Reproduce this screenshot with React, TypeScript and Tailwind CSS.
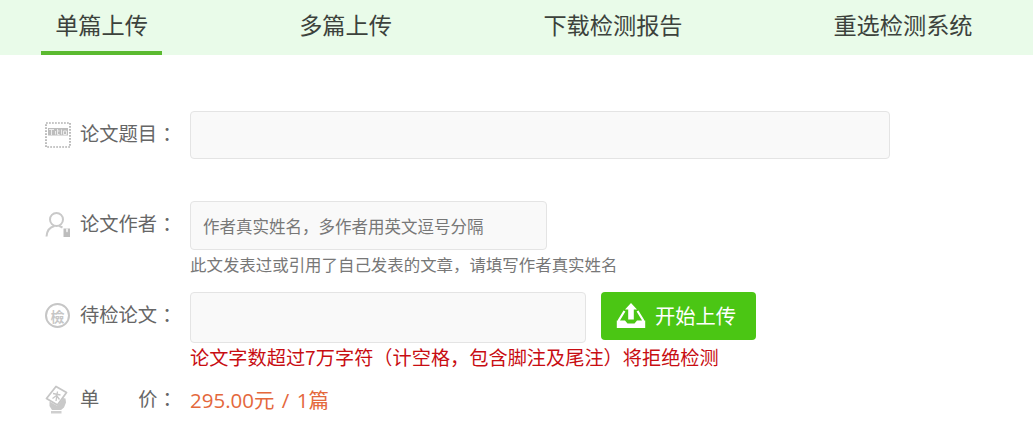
import type { ReactNode } from 'react';

const tabs = [
  { label: '单篇上传', className: 'ml-[41px] w-[121px]', active: true },
  { label: '多篇上传', className: 'ml-[123px] w-[121px]' },
  { label: '下载检测报告', className: 'ml-[122px] w-[170px]' },
  { label: '重选检测系统', className: 'ml-[120px] w-[170px]' },
];

function TitleIcon() {
  return (
    <svg width="26" height="26" viewBox="0 0 26 26" fill="none">
      <rect x="1" y="1" width="24" height="24" stroke="#8f8f8f" strokeWidth="1.2" strokeDasharray="1.8 1.2" />
      <rect x="3" y="6" width="20" height="7.500" fill="#bdbdbd" />
      <path d="M4 7.500h5M6.500 7.500V13M10.500 9v3.500M12.500 7v5.500h2M12 9h2.500M16.500 7.500v5M18.500 12.500v-3.500h3v3.500h-3" stroke="#ececec" />
    </svg>
  );
}

function AuthorIcon() {
  return (
    <svg width="26" height="26" viewBox="0 0 26 26" fill="none">
      <circle cx="11.500" cy="7.500" r="6.500" stroke="#c9c9c9" strokeWidth="2" />
      <path d="M1.500 24.500c.4-5.500 3.500-9.500 8-10.500M14 13.800l3.500 1.700" stroke="#c9c9c9" strokeWidth="2" />
      <path d="M18.500 16.500H25V25h-6.500z" fill="#bdbdbd" />
      <path d="M21 16.500h2v4l-1-1-1 1z" fill="#ececec" />
    </svg>
  );
}

function CheckPaperIcon() {
  return (
    <span className="flex size-[25px] items-center justify-center rounded-full border-2 border-[#c6c6c6] text-[14px] leading-none font-bold text-[#c6c6c6]">
      檢
    </span>
  );
}

function PriceIcon() {
  return (
    <svg width="24" height="30" viewBox="0 0 24 30" fill="none">
      <path d="M11 1.500 21.500 7.500 12.500 20 1.500 13.500z" stroke="#c6c6c6" strokeWidth="1.800" strokeLinejoin="round" />
      <path d="M8 8.500l7.500 1.500M12.500 6.500 11 16M11.500 10.500l-4 3M11.500 10.500l3 4" stroke="#c6c6c6" strokeWidth="1.300" />
      <path d="M4.500 16.500l8 4.500 5.500-8 2.500.5.5 4-2 5-3 2.500H7L4.500 21z" fill="#c9c9c9" />
      <path d="M6 26h10.500v2.500H6z" fill="#cfcfcf" />
    </svg>
  );
}

function UploadIcon() {
  return (
    <svg width="30" height="26" viewBox="0 0 30 26" fill="#fff">
      <path d="M15 0 21 6.500h-3.200v10h-5.600v-10H9z" />
      <path d="M8.500 8 3 17v3h6M21.500 8 27 17v3h-6" fill="none" stroke="#fff" strokeWidth="2.200" />
      <path d="M.800 17.500h8.200l2.500 3h7l2.500-3h8.200V25H.800z" />
    </svg>
  );
}

function Label({ icon, children }: { icon: ReactNode; children: ReactNode }) {
  return (
    <div className="flex w-[190px] shrink-0 items-center pb-px pl-[45px]">
      <div className="flex w-[35px] shrink-0 items-center">{icon}</div>
      <div className="flex pb-[3px] text-[19.3px] leading-[28px] whitespace-nowrap text-[#666]">
        {children}
        <span className="pl-[5px]">：</span>
      </div>
    </div>
  );
}

const field = 'rounded-[4px] border border-[#e4e4e4] bg-[#f9f9f9] px-[12px] outline-none';

export default function App() {
  return (
    <div className="h-[446px] w-[1033px] overflow-hidden bg-white font-['Noto_Sans_CJK_SC',sans-serif]">
      <nav className="flex h-[55px] bg-[#e9fbe9]">
        {tabs.map(tab => (
          <a
            key={tab.label}
            href="#"
            className={`flex h-[55px] shrink-0 justify-center border-b-4 pt-[8px] text-[23.2px] leading-[32px] whitespace-nowrap text-[#3c423c] ${tab.active ? 'border-[#5bba30]' : 'border-transparent'} ${tab.className}`}
          >
            {tab.label}
          </a>
        ))}
      </nav>

      <form className="pt-[56px]">
        <div className="flex h-[90px]">
          <div className="flex h-[48px] items-center">
            <Label icon={<TitleIcon />}>论文题目</Label>
          </div>
          <input className={`${field} h-[48px] w-[700px]`} />
        </div>

        <div className="flex h-[91px]">
          <div className="flex h-[48px] items-center">
            <Label icon={<AuthorIcon />}>论文作者</Label>
          </div>
          <div>
            <input
              className={`${field} block h-[49px] w-[357px] text-[16.5px] placeholder:text-[#777]`}
              placeholder="作者真实姓名，多作者用英文逗号分隔"
            />
            <p className="pt-[2px] text-[16.45px] leading-[24px] whitespace-nowrap text-[#777]">
              此文发表过或引用了自己发表的文章，请填写作者真实姓名
            </p>
          </div>
        </div>

        <div className="flex h-[94px]">
          <div className="flex h-[48px] items-center">
            <Label icon={<CheckPaperIcon />}>待检论文</Label>
          </div>
          <div>
            <div className="flex items-start gap-[15px]">
              <input className={`${field} h-[51px] w-[396px]`} />
              <button
                type="button"
                className="flex h-[48px] w-[155px] items-center rounded-[4px] bg-[#4bc614] pl-[15px] text-[20.3px] text-white"
              >
                <UploadIcon />
                <span className="pb-[3px] pl-[9px] leading-[28px] whitespace-nowrap">开始上传</span>
              </button>
            </div>
            <p className="text-[19.2px] leading-[28px] whitespace-nowrap text-[#c80d12]">
              论文字数超过7万字符（计空格，包含脚注及尾注）将拒绝检测
            </p>
          </div>
        </div>

        <div className="flex h-[28px] items-center">
          <Label icon={<PriceIcon />}>
            <span>单</span>
            <span className="pl-[39px]">价</span>
          </Label>
          <span className="font-['Open_Sans','Noto_Sans_CJK_SC',sans-serif] text-[20.5px] leading-[28px] [word-spacing:2px] whitespace-nowrap text-[#e4683c]">
            295.00元 / 1篇
          </span>
        </div>
      </form>
    </div>
  );
}
